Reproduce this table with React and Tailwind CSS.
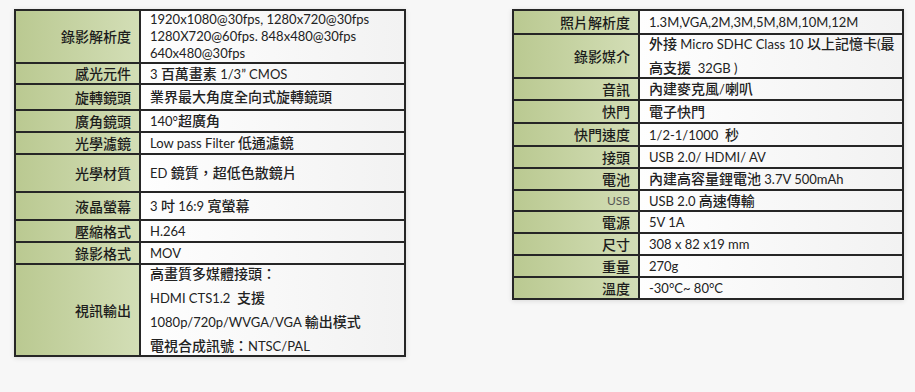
import React from "react";

const CJK = /([\u2E80-\u9FFF\uF900-\uFAFF\uFF00-\uFFEF\u3000-\u303F]+)/;

function Txt({ text }) {
  const parts = text.split(CJK);
  return (
    <>
      {parts.map((p, i) =>
        CJK.test(p) ? (
          <span key={i} className="text-[14px] font-medium">
            {p}
          </span>
        ) : (
          <span key={i}>{p}</span>
        )
      )}
    </>
  );
}

const left = [
  {
    label: "錄影解析度",
    h: "h-[51px]",
    lh: "leading-[17px]",
    lines: ["1920x1080@30fps, 1280x720@30fps", "1280X720@60fps. 848x480@30fps", "640x480@30fps"],
  },
  { label: "感光元件", h: "h-[21px]", lines: ["3 百萬畫素 1/3” CMOS"] },
  { label: "旋轉鏡頭", h: "h-[26px]", lines: ["業界最大角度全向式旋轉鏡頭"] },
  { label: "廣角鏡頭", h: "h-[22px]", lines: ["140°超廣角"] },
  { label: "光學濾鏡", h: "h-[22px]", lines: ["Low pass Filter 低通濾鏡"] },
  { label: "光學材質", h: "h-[38px]", lines: ["ED 鏡質，超低色散鏡片"] },
  { label: "液晶螢幕", h: "h-[28px]", lines: ["3 吋 16:9 寬螢幕"] },
  { label: "壓縮格式", h: "h-[22px]", lines: ["H.264"] },
  { label: "錄影格式", h: "h-[22px]", lines: ["MOV"] },
  {
    label: "視訊輸出",
    h: "h-[92px]",
    lh: "leading-[23px]",
    lines: ["高畫質多媒體接頭：", "HDMI CTS1.2  支援", "1080p/720p/WVGA/VGA 輸出模式", "電視合成訊號：NTSC/PAL"],
  },
];

const right = [
  { label: "照片解析度", h: "h-[22px]", lines: ["1.3M,VGA,2M,3M,5M,8M,10M,12M"] },
  {
    label: "錄影媒介",
    h: "h-[44px]",
    lh: "leading-[24px]",
    lines: ["外接 Micro SDHC Class 10 以上記憶卡(最", "高支援  32GB )"],
  },
  { label: "音訊", h: "h-[22px]", lines: ["內建麥克風/喇叭"] },
  { label: "快門", h: "h-[23px]", lines: ["電子快門"] },
  { label: "快門速度", h: "h-[23px]", lines: ["1/2-1/1000  秒"] },
  { label: "接頭", h: "h-[22px]", lines: ["USB 2.0/ HDMI/ AV"] },
  { label: "電池", h: "h-[22px]", lines: ["內建高容量鋰電池 3.7V 500mAh"] },
  { label: "USB", h: "h-[21px]", lines: ["USB 2.0 高速傳輸"], small: true },
  { label: "電源", h: "h-[22px]", lines: ["5V 1A"] },
  { label: "尺寸", h: "h-[22px]", lines: ["308 x 82 x19 mm"] },
  { label: "重量", h: "h-[22px]", lines: ["270g"] },
  { label: "溫度", h: "h-[22px]", lines: ["-30°C~ 80°C"] },
];

function SpecTable({ rows, labelW }) {
  return (
    <div className="w-[392px] border-2 border-[#262626] bg-white shadow-[0_1px_5px_rgba(0,0,0,0.12)]">
      {rows.map((r, i) => (
        <div
          key={i}
          className={`flex ${r.h} ${i > 0 ? "border-t-2 border-[#262626]" : ""}`}
        >
          <div
            className={`${labelW} shrink-0 flex items-center justify-end pr-[8px] border-r-2 border-[#262626] bg-linear-to-r from-[#bac991] to-[#d3deb6]`}
          >
            {r.small ? (
              <span className="text-[12px] text-[#555]">{r.label}</span>
            ) : (
              <span className="text-[14px] font-medium text-[#1c1c1c]">{r.label}</span>
            )}
          </div>
          <div className="flex-1 flex items-center pl-[9px] bg-linear-to-r from-[#fefefe] to-[#f2f2f2]">
            <div className={`${r.lh || "leading-[20px]"} text-[#222] whitespace-pre`}>
              {r.lines.map((l, j) => (
                <div key={j}>
                  <Txt text={l} />
                </div>
              ))}
            </div>
          </div>
        </div>
      ))}
    </div>
  );
}

export default function App() {
  return (
    <div className="w-[915px] h-[392px] bg-[#f7f7f7] font-['Lato','Noto_Sans_CJK_TC',sans-serif] text-[13px] overflow-hidden">
      <div className="flex items-start pt-[9px] pl-[14px] gap-[106px]">
        <SpecTable rows={left} labelW="w-[125px]" />
        <SpecTable rows={right} labelW="w-[126px]" />
      </div>
    </div>
  );
}
